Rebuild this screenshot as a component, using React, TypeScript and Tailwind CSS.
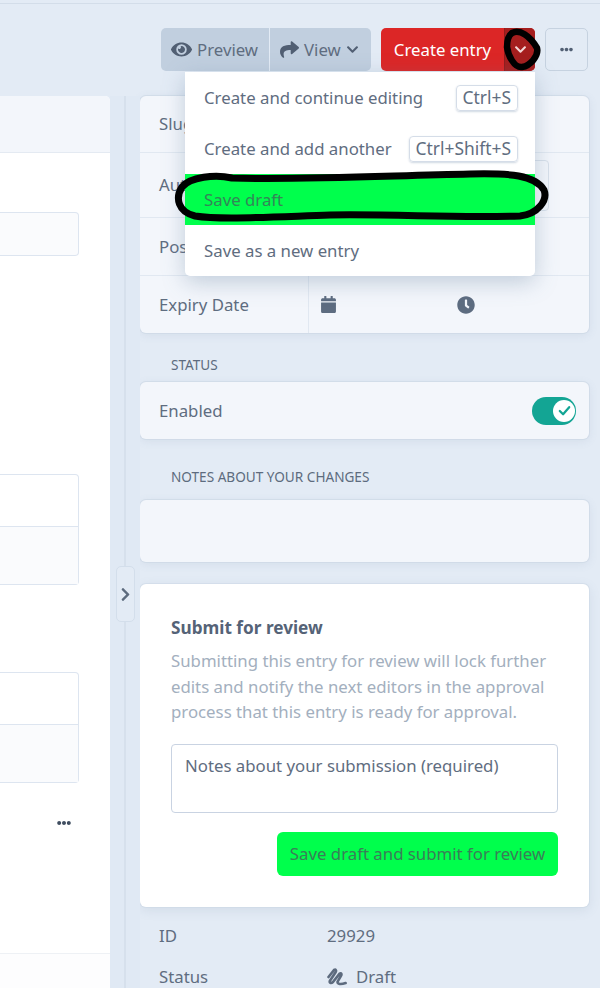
import { FaCalendar, FaChevronDown, FaChevronRight, FaClock, FaEllipsisH, FaEye, FaShare } from 'react-icons/fa';

const menuItems = [
  { label: 'Create and continue editing', shortcut: 'Ctrl+S' },
  { label: 'Create and add another', shortcut: 'Ctrl+Shift+S' },
  { label: 'Save draft', highlight: true },
  { label: 'Save as a new entry' },
];

function DropdownMenu() {
  return (
    <div className="absolute left-[185px] top-[72px] z-10 w-[350px] overflow-hidden rounded-b-[5px] bg-white shadow-[0_6px_22px_rgba(96,125,159,0.35)]">
      {menuItems.map((item) => (
        <div
          key={item.label}
          className={`flex h-[51px] items-center justify-between pl-[19px] pr-[17px] ${item.highlight ? 'bg-[#00ff4c] text-[#348558]' : ''}`}
        >
          <span>{item.label}</span>
          {item.shortcut && (
            <span className="flex h-[26px] items-center rounded-[4px] border border-[#d5dde8] px-[6px] text-[17.4px] shadow-[0_1px_2px_rgba(96,125,159,0.3)]">
              {item.shortcut}
            </span>
          )}
        </div>
      ))}
    </div>
  );
}

function Toolbar() {
  return (
    <div className="flex h-[92px] items-start justify-end pr-[12px] pt-[24px]">
      <div className="flex h-[43px] w-[210px] overflow-hidden rounded-[5px] bg-[#c1cfdf]">
        <div className="flex w-[109px] items-center gap-[5px] border-r border-[#e3ebf5] pl-[10px]">
          <FaEye className="shrink-0 text-[21px] text-[#515f73]" />
          <span>Preview</span>
        </div>
        <div className="flex flex-1 items-center gap-[5px] pl-[10px]">
          <FaShare className="shrink-0 text-[19px] text-[#515f73]" />
          <span>View</span>
          <FaChevronDown className="text-[13px] text-[#515f73]" />
        </div>
      </div>
      <div className="ml-[10px] flex h-[43px] w-[154px] overflow-hidden rounded-[5px] bg-[#dc2626] text-white">
        <div className="flex w-[124px] items-center justify-center border-r border-[#8f1d1d]">Create entry</div>
        <div className="flex flex-1 items-center justify-center bg-[#a51e1e]">
          <FaChevronDown className="text-[13px] text-[#f3d6d6]" />
        </div>
      </div>
      <div className="ml-[10px] flex h-[43px] w-[43px] items-center justify-center rounded-[5px] border border-[#c6d2e0]">
        <FaEllipsisH className="text-[13px] text-[#515f73]" />
      </div>
    </div>
  );
}

function LeftPanel() {
  const tableBox = 'rounded-r-[4px] border border-l-0 border-[#dde5f0]';
  return (
    <div className="flex h-[892px] w-[110px] flex-col rounded-tr-[5px] bg-white">
      <div className="h-[57px] shrink-0 rounded-tr-[5px] border-b border-[#e4eaf2] bg-[#f3f6fb]" />
      <div className="flex flex-1 flex-col pr-[31px]">
        <div className={`mt-[59px] h-[44px] bg-[#fafbfd] ${tableBox}`} />
        <div className={`mt-[218px] ${tableBox}`}>
          <div className="h-[52px] border-b border-[#dde5f0]" />
          <div className="h-[57px] bg-[#fafbfd]" />
        </div>
        <div className={`mt-[87px] ${tableBox}`}>
          <div className="h-[52px] border-b border-[#dde5f0]" />
          <div className="h-[57px] bg-[#fafbfd]" />
        </div>
        <div className="mt-[33px] flex justify-end pr-[8px]">
          <FaEllipsisH className="text-[14px] text-[#3f4d60]" />
        </div>
      </div>
      <div className="h-[35px] shrink-0 border-t border-[#eef1f5] bg-[#fdfdfe]" />
    </div>
  );
}

function MetaCard() {
  const rowLabel = 'flex w-[169px] items-center border-r border-[#e1e8f1] pl-[19px]';
  return (
    <div className="rounded-[6px] bg-[#f3f6fb] shadow-[0_0_0_1px_rgba(205,216,230,0.7),0_2px_10px_rgba(96,125,159,0.12)]">
      <div className="flex h-[57px] border-b border-[#e1e8f1]">
        <div className={rowLabel}>Slug</div>
      </div>
      <div className="flex h-[65px] border-b border-[#e1e8f1]">
        <div className={rowLabel}>Author</div>
        <div className="flex flex-1 items-center justify-end pr-[40px]">
          <div className="h-[51px] w-[200px] rounded-r-[4px] border border-[#d8e0ea]" />
        </div>
      </div>
      <div className="flex h-[58px] border-b border-[#e1e8f1]">
        <div className={rowLabel}>Post Date</div>
      </div>
      <div className="flex h-[57px]">
        <div className={rowLabel}>Expiry Date</div>
        <div className="flex flex-1 items-center pl-[11px] text-[#5d6c80]">
          <FaCalendar className="text-[17px]" />
          <FaClock className="ml-[120px] text-[18px]" />
        </div>
      </div>
    </div>
  );
}

function Toggle() {
  return (
    <div className="flex h-[28px] w-[44px] items-center justify-end rounded-full bg-[#13a594] pr-[1px]">
      <div className="flex h-[22px] w-[22px] items-center justify-center rounded-full bg-white">
        <svg viewBox="0 0 16 16" className="h-[15px] w-[15px]" fill="none" stroke="#13a594" strokeWidth="2.4" strokeLinecap="round" strokeLinejoin="round">
          <path d="M3 8.5 L6.5 12 L13 4.5" />
        </svg>
      </div>
    </div>
  );
}

function ReviewCard() {
  return (
    <div className="mt-[22px] h-[323px] rounded-[6px] bg-white px-[31px] pt-[33px] shadow-[0_0_0_1px_rgba(205,216,230,0.6),0_3px_12px_rgba(96,125,159,0.14)]">
      <h2 className="text-[17.2px] font-bold leading-[22px] text-[#556377]">Submit for review</h2>
      <p className="mt-[9px] leading-[25.6px] text-[#a3afbe]">
        Submitting this entry for review will lock further edits and notify the next editors in the approval process that this entry is ready for approval.
      </p>
      <div className="mt-[19px] h-[69px] rounded-[4px] border border-[#c9d3e2] px-[13px] pt-[8px] leading-[26px]">
        Notes about your submission (required)
      </div>
      <div className="mt-[19px] flex justify-end">
        <div className="flex h-[44px] w-[281px] items-center justify-center whitespace-nowrap rounded-[6px] bg-[#00ff4c] text-[#3a7d58]">
          Save draft and submit for review
        </div>
      </div>
    </div>
  );
}

function Sidebar() {
  const sectionLabel = 'pl-[31px] text-[13.6px] uppercase leading-[18px] text-[#5d6b7e]';
  const cardBox = 'rounded-[6px] bg-[#f3f6fb] shadow-[0_0_0_1px_rgba(205,216,230,0.7),0_2px_10px_rgba(96,125,159,0.12)]';
  return (
    <div className="w-[449px]">
      <MetaCard />
      <div className={`mt-[23px] ${sectionLabel}`}>Status</div>
      <div className={`mt-[8px] flex h-[57px] items-center justify-between pl-[19px] pr-[13px] ${cardBox}`}>
        <span>Enabled</span>
        <Toggle />
      </div>
      <div className={`mt-[29px] ${sectionLabel}`}>Notes about your changes</div>
      <div className={`mt-[14px] h-[62px] ${cardBox}`} />
      <ReviewCard />
      <div className="mt-[18px] flex h-[22px] items-center pl-[19px]">
        <span className="w-[168px]">ID</span>
        <span>29929</span>
      </div>
      <div className="mt-[19px] flex h-[22px] items-center pl-[19px]">
        <span className="w-[168px]">Status</span>
        <svg viewBox="0 0 20 18" className="mr-[9px] h-[18px] w-[20px]" fill="none" stroke="#5d6b7e" strokeWidth="2.6" strokeLinecap="round" strokeLinejoin="round">
          <path d="M1.5 9 L7 2 C8.8 1 9.6 2.6 8.6 4.2 L2.8 13 C2.2 15.6 4.6 15.4 6 14 L12.6 5.6 C14.2 4.6 15 6.2 14 7.8 L10.6 13.6 C10 16.4 14 16.6 18.6 15" />
        </svg>
        <span>Draft</span>
      </div>
    </div>
  );
}

// hand-drawn marker strokes sitting over the screenshot
function Annotations() {
  return (
    <svg className="pointer-events-none absolute left-0 top-0 z-20" width="600" height="988" fill="none" stroke="#000" strokeLinecap="round" strokeLinejoin="round">
      <path
        d="M232 178 C300 180 380 176 470 174 C510 173 535 175 544 190 C548 200 538 214 520 216 C450 218 400 214 330 215 C270 217 220 220 195 216 C178 212 175 198 182 187 C190 177 215 174 232 178 Z"
        strokeWidth="7"
      />
      <path
        d="M512 33 C520 29 530 36 537 48 C539 56 530 66 522 67 C514 68 508 55 507 47 C507 40 509 35 512 33 Z"
        strokeWidth="6.5"
      />
    </svg>
  );
}

export default function App() {
  return (
    <div
      className="relative h-[988px] w-[600px] overflow-hidden bg-[#e3ebf5] text-[16.8px] text-[#5f6d80]"
      style={{ fontFamily: '"Noto Sans", "Open Sans", sans-serif' }}
    >
      <div className="h-[4px] border-b border-[#d3dde9]" />
      <Toolbar />
      <div className="flex">
        <LeftPanel />
        <div className="relative h-[892px] w-[30px] bg-[#e0e9f4]">
          <div className="mx-auto h-full w-[2px] bg-[#d6e0ec]" />
          <div className="absolute left-[6px] top-[470px] flex h-[56px] w-[19px] items-center justify-center rounded-[5px] border border-[#d3deeb] bg-[#e3ebf5]">
            <FaChevronRight className="text-[15px] text-[#5d6b7e]" />
          </div>
        </div>
        <Sidebar />
      </div>
      <DropdownMenu />
      <Annotations />
    </div>
  );
}
